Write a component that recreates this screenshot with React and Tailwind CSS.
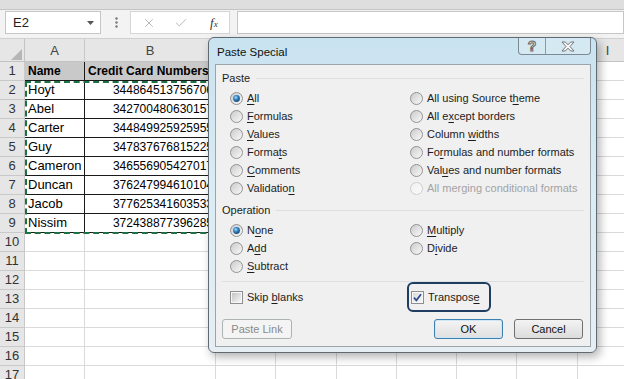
import React, { useId } from "react";
import { X, Check } from "lucide-react";

const colWidths = ["w-[60px]", "w-[131px]", "w-[60px]", "w-[61px]", "w-[60px]", "w-[60px]", "w-[60px]", "w-[61px]", "w-[60px]"];
const letters = ["A", "B", "C", "D", "E", "F", "G", "H", "I"];

const people = [
  ["Hoyt", "344864513756706"],
  ["Abel", "342700480630157"],
  ["Carter", "344849925925955"],
  ["Guy", "347837676815225"],
  ["Cameron", "346556905427017"],
  ["Duncan", "376247994610104"],
  ["Jacob", "377625341603533"],
  ["Nissim", "372438877396285"],
];

const safeId = (s) => s.replace(/[^a-zA-Z0-9]/g, "");

// text with one underlined access key
const Mn = ({ text, u, className = "" }) => {
  if (u == null) return <span className={className}>{text}</span>;
  return (
    <span className={className}>
      {text.slice(0, u)}
      <span className="underline underline-offset-[2px]">{text[u]}</span>
      {text.slice(u + 1)}
    </span>
  );
};

const Radio = ({ checked, disabled }) => {
  const id = safeId(useId());
  return (
    <svg width="13" height="13" viewBox="0 0 13 13" className="shrink-0">
      <defs>
        <linearGradient id={`${id}o`} x1="0" y1="0" x2="1" y2="1">
          <stop offset="0" stopColor={disabled ? "#f1f1f1" : "#c9c9c9"} />
          <stop offset="1" stopColor={disabled ? "#fafafa" : "#fbfbfb"} />
        </linearGradient>
        <radialGradient id={`${id}d`} cx="0.4" cy="0.35" r="0.7">
          <stop offset="0" stopColor="#a8dcf8" />
          <stop offset="0.45" stopColor="#3486c6" />
          <stop offset="1" stopColor="#163e68" />
        </radialGradient>
      </defs>
      <circle cx="6.5" cy="6.5" r="6" fill={`url(#${id}o)`} stroke={disabled ? "#cdcdcd" : "#939393"} />
      {checked && <circle cx="6.5" cy="6.5" r="3.4" fill={`url(#${id}d)`} />}
    </svg>
  );
};

const Box = ({ checked }) => {
  const id = safeId(useId());
  return (
    <svg width="13" height="13" viewBox="0 0 13 13" className="shrink-0">
      <defs>
        <linearGradient id={`${id}b`} x1="0" y1="0" x2="1" y2="1">
          <stop offset="0" stopColor={checked ? "#dcdcdc" : "#c4c4c4"} />
          <stop offset="1" stopColor="#f6f6f6" />
        </linearGradient>
      </defs>
      <rect x="0.5" y="0.5" width="12" height="12" fill="#f7f7f7" stroke="#8f8f8f" />
      <rect x="2" y="2" width="9" height="9" fill={`url(#${id}b)`} />
      {checked && <path d="M3 6.6 L5.4 9.3 L10 3.2" fill="none" stroke="#2f4c8c" strokeWidth="1.7" />}
    </svg>
  );
};

const Opt = ({ label, u, checked, disabled }) => (
  <div className="flex items-center h-[18px] gap-[4px]">
    <Radio checked={checked} disabled={disabled} />
    <Mn text={label} u={u} className={disabled ? "text-[#a3a3a3]" : "text-[#1c1c1c]"} />
  </div>
);

const GroupLabel = ({ text }) => (
  <div className="flex items-center h-[16px] px-[6px] text-[#1c1c1c]">
    <span>{text}</span>
    <div className="flex-1 h-px bg-[#dcdfe2] ml-[6px]" />
  </div>
);

const pasteRows = [
  [{ label: "All", u: 0, checked: true }, { label: "All using Source theme", u: 18 }],
  [{ label: "Formulas", u: 0 }, { label: "All except borders", u: 5 }],
  [{ label: "Values", u: 0 }, { label: "Column widths", u: 7 }],
  [{ label: "Formats", u: 5 }, { label: "Formulas and number formats", u: 2 }],
  [{ label: "Comments", u: 0 }, { label: "Values and number formats", u: 3 }],
  [{ label: "Validation", u: 9 }, { label: "All merging conditional formats", disabled: true }],
];

const opRows = [
  [{ label: "None", u: 1, checked: true }, { label: "Multiply", u: 0 }],
  [{ label: "Add", u: 1 }, { label: "Divide", u: 1 }],
  [{ label: "Subtract", u: 0 }, null],
];

const OptGrid = ({ rows }) => (
  <div className="grid grid-cols-[180px_1fr] pl-[14px]">
    {rows.flatMap((r, i) =>
      r.map((o, j) => (o ? <Opt key={`${i}-${j}`} {...o} /> : <div key={`${i}-${j}`} className="h-[18px]" />))
    )}
  </div>
);

const Toolbar = () => (
  <div className="h-[38px] bg-[#f3f3f3] flex flex-col">
    <div className="h-[10px] bg-[#dedede] border-b border-[#c4c4c4]" />
    <div className="flex items-start pt-px">
      <div className="ml-[5px] w-[96px] h-[23px] bg-white border border-[#c6c6c6] flex items-center pl-[7px] pr-[6px] text-[13px] text-[#222]">
        E2
        <svg className="ml-auto" width="7" height="4" viewBox="0 0 7 4">
          <path d="M0 0H7L3.5 4Z" fill="#555" />
        </svg>
      </div>
      <svg className="ml-[14px] mt-[6px]" width="3" height="11" viewBox="0 0 3 11">
        <circle cx="1.5" cy="1.5" r="1.2" fill="#777" />
        <circle cx="1.5" cy="5.5" r="1.2" fill="#777" />
        <circle cx="1.5" cy="9.5" r="1.2" fill="#777" />
      </svg>
      <div className="ml-[12px] w-[100px] h-[23px] bg-white border border-[#d6d6d6] flex items-center">
        <X size={14} strokeWidth={1.4} className="ml-[11px] text-[#a9a9a9]" />
        <Check size={14} strokeWidth={1.4} className="ml-[18px] text-[#a9a9a9]" />
        <span className="ml-[22px] font-['Liberation_Serif',serif] italic text-[13px] text-[#333] leading-none">
          f<span className="text-[9px]">x</span>
        </span>
      </div>
      <div className="ml-[7px] flex-1 h-[23px] bg-white border border-[#c6c6c6]" />
    </div>
  </div>
);

const ColumnHeaders = () => (
  <div className="flex h-[24px] bg-[#e6e6e6] border-b border-[#c3c3c3] border-t border-t-[#d0d0d0]">
    <div className="w-[25px] shrink-0 border-r border-[#c3c3c3] flex items-end justify-end pr-[2px] pb-[1px]">
      <svg width="11" height="11" viewBox="0 0 11 11">
        <path d="M11 0 L11 11 L0 11 Z" fill="#b6b6b6" />
      </svg>
    </div>
    {letters.map((l, i) => (
      <div key={l} className={`${colWidths[i]} shrink-0 border-r border-[#c9c9c9] flex items-center justify-center pt-[2px] text-[13px] text-[#444]`}>
        {l}
      </div>
    ))}
  </div>
);

const Row = ({ n }) => {
  const data = n >= 2 && n <= 9 ? people[n - 2] : null;
  const head = n === 1;
  return (
    <div className="flex h-[19px]">
      <div className="w-[25px] shrink-0 bg-[#e6e6e6] border-r border-b border-[#c9c9c9] flex items-center justify-center text-[13px] text-[#333]">
        {n}
      </div>
      {letters.map((l, i) => {
        const inTable = n <= 9 && i < 2;
        let cls = `${colWidths[i]} shrink-0 border-r border-b flex items-center overflow-hidden whitespace-nowrap `;
        cls += inTable ? "border-[#1a1a1a] text-black " : "border-[#dadada] ";
        if (head && i < 2) cls += "bg-[#c9c9c9] font-bold text-[12px] pl-[3px]";
        else if (i === 0) cls += "text-[13px] pl-[3px]";
        else if (i === 1) cls += "text-[12px] justify-end pr-[2px]";
        let content = null;
        if (head && i === 0) content = "Name";
        if (head && i === 1) content = "Credit Card Numbers";
        if (data && i < 2) content = data[i];
        return (
          <div key={l} className={cls}>
            {content}
          </div>
        );
      })}
    </div>
  );
};

const Dialog = () => (
  <div className="absolute left-[208px] top-[37px] w-[389px] h-[316px] rounded-[6px] border border-[#5f6a72] bg-gradient-to-b from-[#c9e3f0] via-[#dbecf4] to-[#e6eef3] shadow-[3px_4px_10px_rgba(0,0,0,0.3)] flex flex-col text-[11px]">
    <div className="h-[26px] flex items-start">
      <div className="pl-[8px] pt-[6px] text-[11.5px] text-[#111]">Paste Special</div>
      <div className="ml-auto mr-[5px] flex h-[17px] border border-t-0 border-[#7e8a93] rounded-b-[4px] bg-[#dcedf5]/60">
        <div className="w-[27px] border-r border-[#8e9aa2] flex items-center justify-center text-[14px] font-bold leading-none text-[#f5f5f5] [-webkit-text-stroke:1px_#666]">
          ?
        </div>
        <div className="w-[44px] flex items-center justify-center">
          <svg width="14" height="11" viewBox="0 0 14 11">
            <path
              d="M1 1 H4.3 L7 3.8 L9.7 1 H13 L9 5.5 L13 10 H9.7 L7 7.2 L4.3 10 H1 L5 5.5 Z"
              fill="#f7f7f7"
              stroke="#666"
              strokeWidth="0.9"
              strokeLinejoin="round"
            />
          </svg>
        </div>
      </div>
    </div>
    <div className="ml-[6px] mr-[5px] mb-[5px] flex-1 border border-[#99a4ab] bg-[#f0f0f0] flex flex-col">
      <div className="mt-[5px]">
        <GroupLabel text="Paste" />
      </div>
      <div className="mt-[3px]">
        <OptGrid rows={pasteRows} />
      </div>
      <div className="mt-[5px]">
        <GroupLabel text="Operation" />
      </div>
      <div className="mt-[3px]">
        <OptGrid rows={opRows} />
      </div>
      <div className="mt-[6px] mx-[6px] h-px bg-[#dcdfe2]" />
      <div className="grid grid-cols-[180px_1fr] pl-[14px] h-[30px] items-center">
        <div className="flex items-center gap-[4px] text-[#1c1c1c]">
          <Box />
          <Mn text="Skip blanks" u={5} />
        </div>
        <div className="-ml-[3px] w-[84px] h-[30px] border-2 border-[#1f3d60] rounded-[6px] flex items-center pl-[2px] gap-[4px] text-[#1c1c1c]">
          <Box checked />
          <Mn text="Transpose" u={8} />
        </div>
      </div>
      <div className="mt-[7px] flex items-center px-[6px] pr-[7px]">
        <div className="w-[70px] h-[20px] border border-[#adb2b5] rounded-[3px] bg-[#f4f4f4] text-[#8a8a8a] flex items-center justify-center">
          Paste Link
        </div>
        <div className="ml-auto w-[69px] h-[20px] border border-[#3c7fb1] rounded-[3px] bg-gradient-to-b from-[#f4f4f4] to-[#e0e0e0] shadow-[inset_0_0_0_1px_#cfe6f5] text-[#111] flex items-center justify-center">
          OK
        </div>
        <div className="ml-[11px] w-[69px] h-[20px] border border-[#707070] rounded-[3px] bg-gradient-to-b from-[#f3f3f3] to-[#dcdcdc] text-[#111] flex items-center justify-center">
          Cancel
        </div>
      </div>
    </div>
  </div>
);

export default function App() {
  const rows = Array.from({ length: 17 }, (_, i) => i + 1);
  return (
    <div className="relative w-[624px] h-[379px] overflow-hidden bg-white font-['Liberation_Sans',Arial,sans-serif]">
      <Toolbar />
      <ColumnHeaders />
      {rows.map((n) => (
        <Row key={n} n={n} />
      ))}
      {/* copy marquee around A2:B9 */}
      <div className="absolute left-[25px] top-[81px] w-[191px] h-[153px] border-2 border-dashed border-[#1e7145] pointer-events-none" />
      <Dialog />
    </div>
  );
}
